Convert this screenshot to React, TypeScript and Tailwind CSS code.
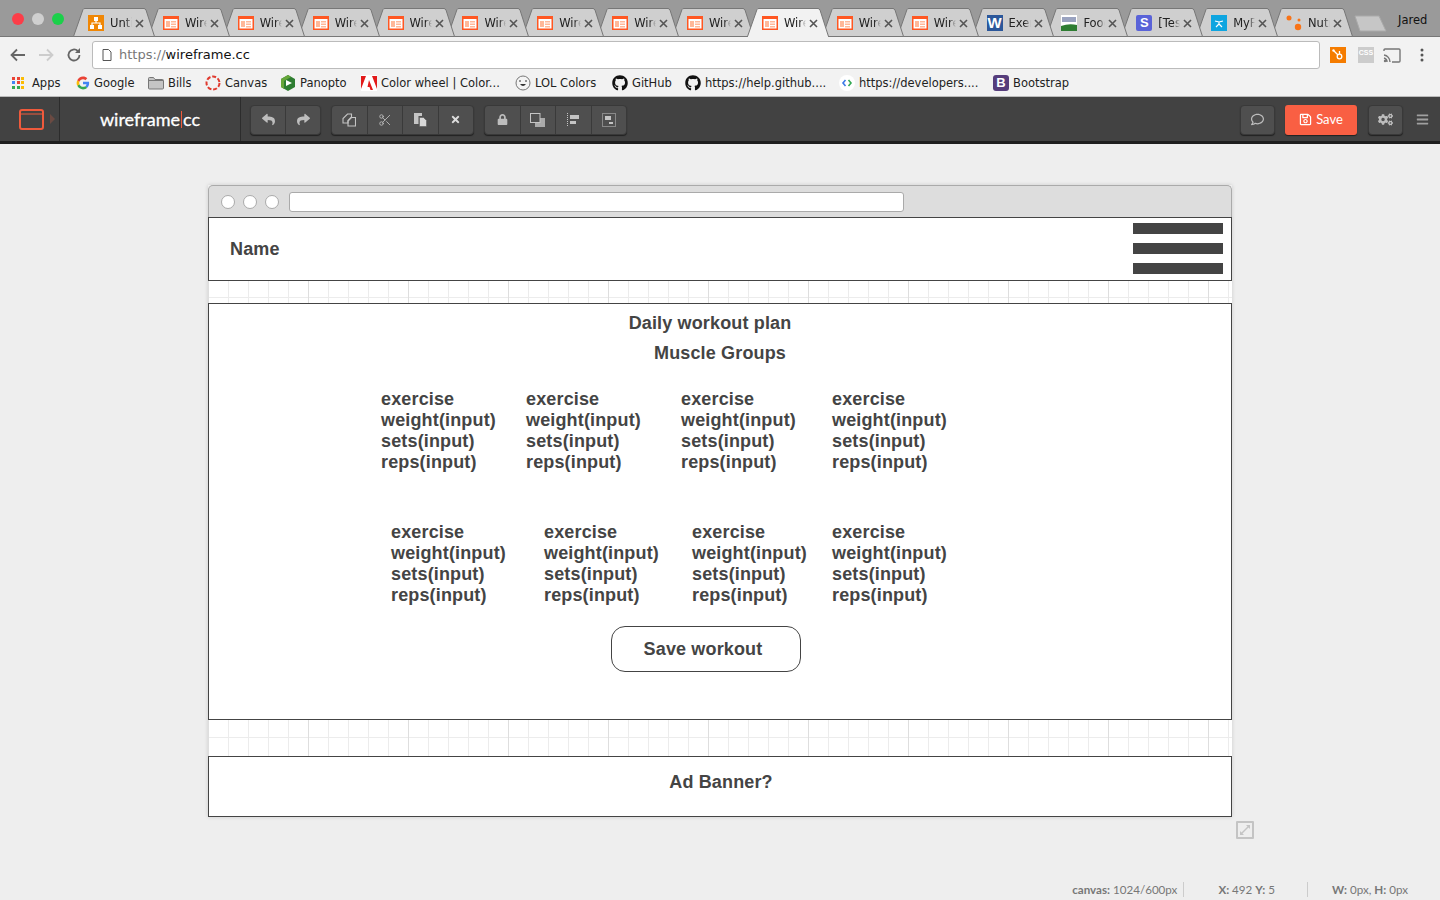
import React from 'react';
import {
  FaReply, FaShare, FaTimes, FaLock, FaRegComment, FaCogs, FaBars, FaGithub, FaRegSave,
} from 'react-icons/fa';
import { Scissors } from 'lucide-react';

const sans = "font-['Liberation_Sans',Arial,sans-serif]";
const ui = "font-['DejaVu_Sans',sans-serif]";

// --- favicons ---

const WireIcon = () => (
  <svg width="16" height="16" viewBox="0 0 16 16" className="shrink-0">
    <rect x="0.750" y="1.750" width="14.500" height="12.500" fill="#fff" stroke="#ff5722" strokeWidth="1.500" />
    <rect x="1" y="2" width="14" height="2" fill="#ff5722" />
    <rect x="3" y="6" width="4" height="6" fill="#ffb899" />
    <rect x="8" y="6" width="5" height="1.500" fill="#ffb899" />
    <rect x="8" y="8.500" width="5" height="1.500" fill="#ffb899" />
    <rect x="8" y="11" width="5" height="1.500" fill="#ffb899" />
  </svg>
);

const UntIcon = () => (
  <svg width="16" height="16" viewBox="0 0 16 16" className="shrink-0">
    <rect width="16" height="16" fill="#f08705" />
    <path d="M8 3v5M4 11V8h8v3" stroke="#fff" strokeWidth="1.200" fill="none" />
    <rect x="6" y="2" width="4" height="4" fill="#fff" />
    <rect x="2" y="10" width="4" height="4" fill="#fff" />
    <rect x="10" y="10" width="4" height="4" fill="#fff" />
  </svg>
);

const WordIcon = () => (
  <div className={`w-4 h-4 shrink-0 bg-[#2b579a] text-white text-[15px] leading-4 font-bold text-center overflow-hidden ${sans}`}>W</div>
);

const UsdaIcon = () => (
  <svg width="16" height="16" viewBox="0 0 16 16" className="shrink-0">
    <rect width="16" height="16" fill="#fff" />
    <rect x="1" y="2" width="14" height="5" fill="#9aa3c0" />
    <path d="M0 11 Q8 8 16 10 V16 H0Z" fill="#2e7d32" />
  </svg>
);

const StripeIcon = () => (
  <div className={`w-4 h-4 shrink-0 rounded-[2px] bg-[#5a63d8] text-white text-[13px] leading-4 font-bold text-center ${sans}`}>S</div>
);

const MfpIcon = () => (
  <svg width="16" height="16" viewBox="0 0 16 16" className="shrink-0">
    <rect width="16" height="16" fill="#0ea5e0" />
    <path d="M4 6l4 1 4-1M8 7v2l-3 3M8 9l3 3" stroke="#fff" strokeWidth="1.200" fill="none" />
  </svg>
);

const NutIcon = () => (
  <svg width="16" height="16" viewBox="0 0 16 16" className="shrink-0">
    <circle cx="3" cy="3" r="2.500" fill="#f97316" />
    <circle cx="13" cy="5" r="1.500" fill="#f97316" />
    <circle cx="12" cy="12" r="3.200" fill="#f97316" />
  </svg>
);

const TABS = [
  { label: 'Untitled', icon: UntIcon },
  ...Array.from({ length: 11 }, () => ({ label: 'Wireframe', icon: WireIcon })),
  { label: 'Exercise', icon: WordIcon },
  { label: 'Food', icon: UsdaIcon },
  { label: '[Test', icon: StripeIcon },
  { label: 'MyFitness', icon: MfpIcon },
  { label: 'Nutrition', icon: NutIcon },
];
const ACTIVE_TAB = 9;

const Tab = ({ label, icon: Icon, index }: { label: string; icon: React.FC; index: number }) => {
  const active = index === ACTIVE_TAB;
  return (
    <div
      className="relative w-[82px] h-[29px] -mr-[7.125px] shrink-0"
      style={{ zIndex: active ? 50 : 40 - index }}
    >
      <svg width="82" height="29" viewBox="0 0 82 29" className="absolute inset-0">
        <path
          d="M0.5 28.5 L10 1.5 Q10.5 0.5 12 0.5 L71 0.5 Q72 0.5 73 2 L81.5 28.5 Z"
          fill={active ? '#f2f2f2' : '#cfcfcf'}
          stroke="#777"
          strokeWidth="1"
        />
        {active && <rect x="1" y="28" width="80" height="2" fill="#f2f2f2" />}
      </svg>
      <div className="absolute inset-0 flex items-center pl-[15px] pt-[1px]">
        <Icon />
        <div className={`ml-[6px] w-[22px] pt-[2px] overflow-hidden whitespace-nowrap text-[11.5px] text-[#222] ${ui} [mask-image:linear-gradient(90deg,#000_70%,transparent)]`}>
          {label}
        </div>
        <svg width="9" height="9" viewBox="0 0 9 9" className="ml-[3px] shrink-0">
          <path d="M1 1l7 7M8 1L1 8" stroke="#555" strokeWidth="1.600" />
        </svg>
      </div>
    </div>
  );
};

// --- bookmarks ---

const AppsIcon = () => (
  <div className="grid grid-cols-3 gap-[1px] w-[13px] h-[13px] shrink-0">
    {['#ea4335', '#ea4335', '#fbbc05', '#4285f4', '#ea4335', '#fbbc05', '#34a853', '#34a853', '#fbbc05'].map((c, i) => (
      <span key={i} className="block w-[3px] h-[3px]" style={{ backgroundColor: c }} />
    ))}
  </div>
);

const GoogleIcon = () => (
  <svg width="14" height="14" viewBox="0 0 48 48" className="shrink-0">
    <path fill="#4285f4" d="M45 24c0-1.500-.1-3-.4-4H24v8h12c-.5 3-2 5-4.500 7l7 5.400C42.700 36.600 45 31 45 24z" />
    <path fill="#34a853" d="M24 46c6 0 11-2 14.500-5.600l-7-5.400c-2 1.300-4.400 2-7.500 2-5.700 0-10.600-3.900-12.300-9L4.400 33.600C8 41 15.500 46 24 46z" />
    <path fill="#fbbc05" d="M11.700 28c-.9-2.600-.9-5.400 0-8L4.400 14.400a22 22 0 0 0 0 19.200z" />
    <path fill="#ea4335" d="M24 11c3.200 0 6 1.100 8.300 3.300l6.300-6.300C34.900 4.300 30 2 24 2 15.500 2 8 7 4.400 14.400l7.300 5.600C13.400 14.900 18.300 11 24 11z" />
  </svg>
);

const FolderIcon = () => (
  <svg width="16" height="14" viewBox="0 0 16 14" className="shrink-0">
    <path d="M.5 2.500a1 1 0 0 1 1-1h4l1.500 2h7.500a1 1 0 0 1 1 1v7.500a1 1 0 0 1-1 1h-13a1 1 0 0 1-1-1z" fill="#c4c4c4" stroke="#777" />
    <path d="M1 4.500h14" stroke="#777" />
  </svg>
);

const CanvasIcon = () => (
  <svg width="16" height="16" viewBox="0 0 16 16" className="shrink-0">
    <circle cx="8" cy="8" r="6.500" fill="none" stroke="#e03a2f" strokeWidth="2" strokeDasharray="4 1.800" />
  </svg>
);

const PanoptoIcon = () => (
  <svg width="16" height="16" viewBox="0 0 16 16" className="shrink-0">
    <path d="M8 0l7 4v8l-7 4-7-4V4z" fill="#2e7d32" />
    <path d="M1 4l7-4 3 2-7 4v8l-3-2z" fill="#66a63a" />
    <path d="M6 5l6 3-6 3z" fill="#fff" />
  </svg>
);

const AdobeIcon = () => (
  <svg width="16" height="16" viewBox="0 0 16 16" className="shrink-0">
    <rect width="16" height="16" fill="#fff" />
    <path d="M0 1h5L0 14zM11 1h5v13zM8 5l4 10H9.500L8.500 12H6.500z" fill="#e21a1a" />
  </svg>
);

const LolIcon = () => (
  <svg width="16" height="16" viewBox="0 0 16 16" className="shrink-0">
    <circle cx="8" cy="8" r="7" fill="#f4f4f4" stroke="#777" />
    <path d="M4 6h2M10 6h2" stroke="#333" />
    <path d="M5 9h6q-3 4-6 0z" fill="#333" />
  </svg>
);

const DevIcon = () => (
  <svg width="16" height="16" viewBox="0 0 16 16" className="shrink-0">
    <circle cx="8" cy="8" r="8" fill="#fff" />
    <path d="M6.500 5L4 8l2.500 3" fill="none" stroke="#3b78e7" strokeWidth="1.600" />
    <path d="M9.500 5L12 8l-2.500 3" fill="none" stroke="#34a853" strokeWidth="1.600" />
  </svg>
);

const BootstrapIcon = () => (
  <div className={`w-4 h-4 shrink-0 rounded-[3px] bg-[#563d7c] text-white text-[13px] leading-4 font-bold text-center ${sans}`}>B</div>
);

const BOOKMARKS = [
  { label: 'Apps', w: 'w-[64px]', gap: 'gap-[7px]', icon: <AppsIcon /> },
  { label: 'Google', w: 'w-[72px]', gap: 'gap-[4px]', icon: <GoogleIcon /> },
  { label: 'Bills', w: 'w-[57px]', gap: 'gap-[4px]', icon: <FolderIcon /> },
  { label: 'Canvas', w: 'w-[75px]', gap: 'gap-[4px]', icon: <CanvasIcon /> },
  { label: 'Panopto', w: 'w-[81px]', gap: 'gap-[4px]', icon: <PanoptoIcon /> },
  { label: 'Color wheel | Color...', w: 'w-[154px]', gap: 'gap-[4px]', icon: <AdobeIcon /> },
  { label: 'LOL Colors', w: 'w-[97px]', gap: 'gap-[4px]', icon: <LolIcon /> },
  { label: 'GitHub', w: 'w-[73px]', gap: 'gap-[4px]', icon: <FaGithub size={16} className="text-[#111] shrink-0" /> },
  { label: 'https://help.github....', w: 'w-[154px]', gap: 'gap-[4px]', icon: <FaGithub size={16} className="text-[#111] shrink-0" /> },
  { label: 'https://developers....', w: 'w-[154px]', gap: 'gap-[4px]', icon: <DevIcon /> },
  { label: 'Bootstrap', w: 'w-[90px]', gap: 'gap-[4px]', icon: <BootstrapIcon /> },
];

const BrowserChrome = () => (
  <div className="h-[97px] shrink-0">
    {/* tab strip */}
    <div className="relative h-[37px] bg-[#9a9a9a] border-b border-[#777]">
      <div className="absolute left-[12px] top-[13px] flex gap-[8px]">
        <span className="w-3 h-3 rounded-full bg-[#fc3d48]" />
        <span className="w-3 h-3 rounded-full bg-[#cfcfcf]" />
        <span className="w-3 h-3 rounded-full bg-[#1bd04a]" />
      </div>
      <div className="absolute left-[73px] top-[8px] flex">
        {TABS.map((t, i) => (
          <Tab key={i} index={i} label={t.label} icon={t.icon} />
        ))}
      </div>
      <svg width="34" height="17" viewBox="0 0 34 17" className="absolute left-[1354px] top-[15px]">
        <path d="M1 1h24l7 15H6z" fill="#c6c6c6" stroke="#aaa" />
      </svg>
      <div className={`absolute left-[1398px] top-[13px] text-[11.5px] leading-[15px] text-[#111] ${ui}`}>Jared</div>
    </div>
    {/* address row */}
    <div className="h-[33px] pt-[3px] bg-[#f2f2f2] flex items-center">
      <div className="w-[92px] flex items-center pl-[10px] gap-[12px] shrink-0">
        <svg width="16" height="14" viewBox="0 0 16 14"><path d="M15 7H2M7 1.500L1.500 7 7 12.500" fill="none" stroke="#666" strokeWidth="1.800" /></svg>
        <svg width="16" height="14" viewBox="0 0 16 14"><path d="M1 7h13M9 1.500L14.500 7 9 12.500" fill="none" stroke="#ccc" strokeWidth="1.800" /></svg>
        <svg width="16" height="16" viewBox="0 0 16 16"><path d="M13.500 8a5.500 5.500 0 1 1-1.700-4" fill="none" stroke="#666" strokeWidth="1.800" /><path d="M14 1v5H9z" fill="#666" /></svg>
      </div>
      <div className={`w-[1228px] h-[28px] bg-white border border-[#bbb] rounded-[3px] flex items-center pl-[9px] text-[13px] ${ui}`}>
        <svg width="10" height="12" viewBox="0 0 10 12" className="mr-[7px]"><path d="M1 .5h5.500L9 3v8.500H1z" fill="#fff" stroke="#555" /></svg>
        <span className="text-[#777]">https://</span>
        <span className="text-[#111]">wireframe.cc</span>
      </div>
      <div className="flex items-center pl-[10px] gap-[12px]">
        <svg width="16" height="16" viewBox="0 0 16 16"><rect width="16" height="16" fill="#f57c00" /><circle cx="9.500" cy="9.500" r="2.300" fill="none" stroke="#fff" strokeWidth="1.300" /><path d="M8 8L4 4M9.500 7V4" stroke="#fff" strokeWidth="1.300" /><circle cx="3.500" cy="3.500" r="1.200" fill="#fff" /></svg>
        <div className="w-[16px] h-[16px] bg-[#ccc] text-white text-[7px] leading-[12px] font-bold text-center"><span className={sans}>CSS</span></div>
        <svg width="18" height="15" viewBox="0 0 18 15" className="-ml-[3px]"><path d="M1 3V2a1 1 0 0 1 1-1h14a1 1 0 0 1 1 1v11a1 1 0 0 1-1 1H9" fill="none" stroke="#777" strokeWidth="1.400" /><path d="M1 7a7 7 0 0 1 6 7M1 10a4 4 0 0 1 3 4" fill="none" stroke="#777" strokeWidth="1.400" /><circle cx="2" cy="13" r="1.200" fill="#777" /></svg>
        <svg width="4" height="14" viewBox="0 0 4 14" className="ml-[7px]"><circle cx="2" cy="2" r="1.500" fill="#555" /><circle cx="2" cy="7" r="1.500" fill="#555" /><circle cx="2" cy="12" r="1.500" fill="#555" /></svg>
      </div>
    </div>
    {/* bookmarks */}
    <div className={`h-[27px] bg-[#f2f2f2] border-b border-[#bbb] flex items-center pl-[12px] text-[11.5px] text-[#222] ${ui}`}>
      {BOOKMARKS.map((b) => (
        <div key={b.label} className={`${b.w} ${b.gap} flex items-center shrink-0 whitespace-nowrap`}>
          {b.icon}
          <span className="pt-[2px]">{b.label}</span>
        </div>
      ))}
    </div>
  </div>
);

// --- app toolbar ---

const CopyIcon = () => (
  <svg width="14" height="14" viewBox="0 0 14 14" fill="none" stroke="#c4c4c4" strokeWidth="1.100">
    <path d="M5.500 1h4v3L6 7.500V10H1V5.500z" />
    <path d="M9.500 4.500h4V13H6V8z" />
  </svg>
);

const PasteIcon = () => (
  <svg width="14" height="15" viewBox="0 0 14 15">
    <path d="M1 1h8v3H5.500v8H1z" fill="#c4c4c4" />
    <path d="M6.500 5.500h4l3 3v6h-7z" fill="#d8d8d8" stroke="#4f4f4f" strokeWidth="0.500" />
  </svg>
);

const FrontIcon = () => (
  <svg width="15" height="14" viewBox="0 0 15 14">
    <path d="M6 5h9v9H5V10z" fill="#aaa" />
    <rect x="0.500" y="0.500" width="9.500" height="9" fill="#4f4f4f" stroke="#c4c4c4" />
  </svg>
);

const AlignIcon = () => (
  <svg width="12" height="14" viewBox="0 0 12 14">
    <path d="M.5 0v14" stroke="#c4c4c4" strokeDasharray="1 1" />
    <rect x="3" y="2" width="9" height="4" fill="#c4c4c4" />
    <rect x="3" y="8" width="6" height="3" fill="#c4c4c4" />
  </svg>
);

const GroupIcon = () => (
  <svg width="14" height="14" viewBox="0 0 14 14">
    <rect x="0.500" y="0.500" width="13" height="13" fill="none" stroke="#c4c4c4" strokeDasharray="1 1" />
    <rect x="3" y="3" width="6" height="4" fill="#c4c4c4" />
    <rect x="7" y="9" width="4" height="2" fill="#c4c4c4" />
  </svg>
);

const ToolGroup = ({ items, w }: { items: React.ReactNode[]; w: string }) => (
  <div className={`${w} flex h-[30px] rounded-[4px] bg-[#4f4f4f] border border-[#393939] shadow-[0_1px_1px_#222] divide-x divide-[#3a3a3a]`}>
    {items.map((it, i) => (
      <div key={i} className="flex-1 flex items-center justify-center text-[#bdbdbd]">{it}</div>
    ))}
  </div>
);

const Toolbar = () => (
  <div className="h-[47px] shrink-0 bg-[#424242] border-b-[3px] border-[#1e1e1e] flex items-stretch font-['Lato',sans-serif]">
    <div className="w-[60px] border-r border-[#2c2c2c] flex items-center pl-[19px] gap-[6px] shrink-0">
      <svg width="25" height="21" viewBox="0 0 25 21" fill="none" stroke="#ef5a3c" strokeWidth="2"><rect x="1" y="1" width="23" height="19" rx="2" /><path d="M1 5h23" strokeWidth="1" /></svg>
      <span className="w-0 h-0 border-y-[5px] border-y-transparent border-l-[5px] border-l-[#6b4a42]" />
    </div>
    <div className="w-[181px] border-r border-[#2c2c2c] flex items-center justify-center shrink-0 text-[18px] font-normal text-white pt-[1px] [-webkit-text-stroke:0.3px_#fff]">
      wireframe<span className="inline-block w-[1px] h-[17px] bg-[#ef5a3c] mx-[1px]" />cc
    </div>
    <div className="flex items-center gap-[10px] pl-[9px] pt-[1px]">
      <ToolGroup w="w-[71px]" items={[<FaReply size={13} />, <FaShare size={13} />]} />
      <ToolGroup w="w-[143px]" items={[<CopyIcon />, <Scissors size={14} strokeWidth={1.5} />, <PasteIcon />, <FaTimes size={11} className="text-[#ddd]" />]} />
      <ToolGroup w="w-[143px]" items={[<FaLock size={11} />, <FrontIcon />, <AlignIcon />, <GroupIcon />]} />
    </div>
    <div className="ml-auto flex items-center pt-[1px] pr-[11px]">
      <div className="w-[35px] h-[30px] rounded-[4px] bg-[#4f4f4f] border border-[#393939] shadow-[0_1px_1px_#222] flex items-center justify-center text-[#bdbdbd]">
        <FaRegComment size={13} />
      </div>
      <div className="ml-[10px] w-[72px] h-[30px] rounded-[3px] bg-[#f95f43] shadow-[0_1px_1px_#222] flex items-center justify-center gap-[4px] text-[13px] text-white">
        <FaRegSave size={13} />
        Save
      </div>
      <div className="ml-[11px] w-[35px] h-[30px] rounded-[4px] bg-[#4f4f4f] border border-[#393939] shadow-[0_1px_1px_#222] flex items-center justify-center text-[#bdbdbd]">
        <FaCogs size={15} />
      </div>
      <FaBars size={13} className="ml-[13px] text-[#a0a0a0]" />
    </div>
  </div>
);

// --- wireframe canvas ---

const ExerciseBlock = ({ className }: { className: string }) => (
  <div className={className}>
    <div>exercise</div>
    <div>weight(input)</div>
    <div>sets(input)</div>
    <div>reps(input)</div>
  </div>
);

const Canvas = () => (
  <div className="w-[1024px] ml-[208px] mt-[41px] shadow-[0_0_4px_rgba(0,0,0,0.15)]">
    <div className="h-[32px] bg-[#dddddd] border-t border-x border-[#aaa] rounded-t-[5px] flex items-center pl-[12px] gap-[8px]">
      <span className="w-[14px] h-[14px] rounded-full bg-white border border-[#aaa]" />
      <span className="w-[14px] h-[14px] rounded-full bg-white border border-[#aaa]" />
      <span className="w-[14px] h-[14px] rounded-full bg-white border border-[#aaa]" />
      <span className="ml-[2px] w-[615px] h-[20px] bg-white border border-[#aaa] rounded-[3px]" />
    </div>
    <div className={`h-[600px] bg-white bg-[linear-gradient(90deg,#dedede_1px,transparent_1px),linear-gradient(#ececec_1px,transparent_1px),linear-gradient(90deg,#ececec_1px,transparent_1px)] bg-[size:100px_100%,20px_20px,20px_20px] text-[18px] leading-[21px] font-bold tracking-[0.15px] text-[#444] ${sans}`}>
      <div className="h-[64px] bg-white border border-[#444] flex items-center justify-between pl-[21px] pr-[8px]">
        <span>Name</span>
        <div className="flex flex-col gap-[9px] -mt-[1px]">
          <div className="w-[90px] h-[11px] bg-[#444]" />
          <div className="w-[90px] h-[11px] bg-[#444]" />
          <div className="w-[90px] h-[11px] bg-[#444]" />
        </div>
      </div>
      <div className="mt-[22px] h-[417px] bg-white border border-[#444]">
        <div className="pt-[9px] text-center pr-[20px]">Daily workout plan</div>
        <div className="pt-[9px] text-center">Muscle Groups</div>
        <div className="flex pl-[172px] pt-[25px]">
          <ExerciseBlock className="w-[145px]" />
          <ExerciseBlock className="w-[155px]" />
          <ExerciseBlock className="w-[151px]" />
          <ExerciseBlock className="w-[150px]" />
        </div>
        <div className="flex pl-[182px] pt-[49px]">
          <ExerciseBlock className="w-[153px]" />
          <ExerciseBlock className="w-[148px]" />
          <ExerciseBlock className="w-[140px]" />
          <ExerciseBlock className="w-[150px]" />
        </div>
        <div className="ml-[402px] mt-[20px] w-[190px] h-[46px] rounded-[14px] border border-[#444] flex items-center justify-center bg-white pr-[6px]">
          Save workout
        </div>
      </div>
      <div className="mt-[36px] h-[61px] bg-white border border-[#444] flex items-center justify-center pl-[2px] pb-[9px]">
        Ad Banner?
      </div>
    </div>
  </div>
);

const StatusBar = () => (
  <div className="mt-auto h-[18px] flex items-start justify-end pr-[32px] text-[11.6px] leading-[15px] text-[#777] font-['Lato',sans-serif]">
    <div className="flex items-center">
      <span><b>canvas:</b> 1024/600px</span>
      <span className="w-px h-[15px] bg-[#ccc] ml-[6px]" />
      <span className="ml-[34px]"><b>X:</b> 492 <b>Y:</b> 5</span>
      <span className="w-px h-[15px] bg-[#ccc] ml-[32px]" />
      <span className="ml-[24px]"><b>W:</b> 0px, <b>H:</b> 0px</span>
    </div>
  </div>
);

export default function App() {
  return (
    <div className="w-[1440px] h-[900px] overflow-hidden flex flex-col bg-[#eeeeee]">
      <BrowserChrome />
      <Toolbar />
      <Canvas />
      <div className="ml-[1236px] mt-[4px] w-[18px] h-[18px] border-2 border-[#c4c4c4] rounded-[1px] flex items-center justify-center">
        <svg width="12" height="12" viewBox="0 0 12 12" stroke="#c4c4c4" strokeWidth="1.500" fill="#c4c4c4">
          <path d="M2 10l8-8" />
          <path d="M7 1h4v4zM1 7v4h4z" strokeWidth="0" />
        </svg>
      </div>
      <StatusBar />
    </div>
  );
}
